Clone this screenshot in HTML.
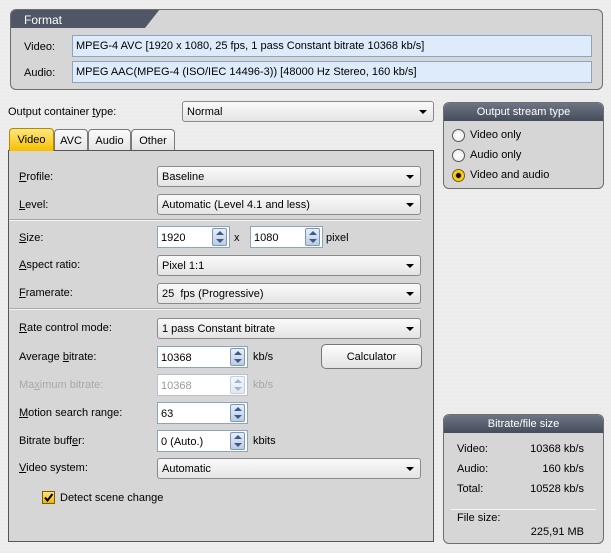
<!DOCTYPE html>
<html><head><meta charset="utf-8"><style>
*{box-sizing:border-box;margin:0;padding:0}
body{width:611px;height:553px;overflow:hidden;position:relative;font-family:"Liberation Sans",sans-serif;font-size:11px;color:#000;
background:repeating-linear-gradient(180deg,#f0f0f0 0px,#e6e6e6 1px,#f3f3f3 2px,#e9e9e9 3px,#efefef 4px);}
.a{position:absolute}
.panel{position:absolute;background:#d6d6d6;border:1px solid #6e6e6e;border-radius:6px}
.field{position:absolute;background:#deebfb;border:1px solid #8aa4c4;padding:4px 0 0 3px;white-space:nowrap;overflow:hidden;font-size:11px}
.combo{position:absolute;height:21px;border:1px solid #8a8a8a;border-radius:3px;background:linear-gradient(#fafafa,#e4e4e4);padding:4px 0 0 4px;white-space:nowrap}
.combo:after{content:"";position:absolute;right:6px;top:8px;border-left:4px solid transparent;border-right:4px solid transparent;border-top:4px solid #000}
.spin{position:absolute;height:22px;background:#fff;border:1px solid #8aa4c4;padding:5px 0 0 3px}
.spin i{position:absolute;right:2px;top:1px;width:15px;height:18px;border:1px solid #7e97b8;border-radius:2px;background:linear-gradient(#e6eefa,#bccce3)}
.spin i:before{content:"";position:absolute;left:3px;top:2px;border-left:4px solid transparent;border-right:4px solid transparent;border-bottom:4px solid #3c5a84}
.spin i:after{content:"";position:absolute;left:3px;top:10px;border-left:4px solid transparent;border-right:4px solid transparent;border-top:4px solid #3c5a84}
.spin.dis{border-color:#b5c2d3;color:#999}
.spin.dis i{opacity:.45}
.hdr{position:absolute;left:0;top:0;right:0;height:18px;background:linear-gradient(#6d7585,#454c5a);color:#fff;text-align:center;padding-top:3px;border-radius:5px 5px 0 0}
.tab{position:absolute;top:129px;height:21px;border:1px solid #7a7a7a;border-bottom:none;border-radius:4px 4px 0 0;background:linear-gradient(#fbfbfb,#e4e4e4);text-align:center;padding-top:5px}
.radio{position:absolute;width:13px;height:13px;border-radius:50%;border:1px solid #555;background:radial-gradient(#fff,#e8e8e8)}
.sep{position:absolute;height:2px;border-top:1px solid #a8a8a8;border-bottom:1px solid #f4f4f4}
u{text-decoration:underline}
</style></head><body>

<div class="panel" style="left:10px;top:9px;width:593px;height:81px;overflow:hidden">
  <svg class="a" style="left:-1px;top:-1px" width="160" height="20"><path d="M0 6 Q0 0 6 0 L150 0 L135 19 L0 19Z" fill="#4f5666"/></svg>
  <div class="a" style="left:13px;top:3px;color:#fff;font-size:12px">Format</div>
  <div class="a" style="left:13px;top:31px">Video:</div>
  <div class="a" style="left:13px;top:57px">Audio:</div>
</div>
<div class="field" style="left:72px;top:35px;width:520px;height:22px">MPEG-4 AVC [1920 x 1080, 25 fps, 1 pass Constant bitrate 10368 kb/s]</div>
<div class="field" style="left:72px;top:61px;width:520px;height:22px">MPEG AAC(MPEG-4 (ISO/IEC 14496-3)) [48000 Hz Stereo, 160 kb/s]</div>

<div class="a" style="left:8px;top:106px">Output container <u>t</u>ype:</div>
<div class="combo" style="left:182px;top:101px;width:252px;height:21px">Normal</div>

<div class="tab" style="left:9px;width:45px;top:128px;height:23px;background:linear-gradient(#ffe680,#f5c000);border-color:#b08a00;z-index:2">Video</div>
<div class="tab" style="left:54px;width:34px">AVC</div>
<div class="tab" style="left:88px;width:43px">Audio</div>
<div class="tab" style="left:131px;width:44px">Other</div>

<div class="a" style="left:8px;top:150px;width:426px;height:392px;background:#d6d6d6;border:1px solid #555"></div>

<div class="a" style="left:19px;top:171px"><u>P</u>rofile:</div>
<div class="combo" style="left:157px;top:166px;width:264px">Baseline</div>
<div class="a" style="left:19px;top:199px"><u>L</u>evel:</div>
<div class="combo" style="left:157px;top:194px;width:264px">Automatic (Level 4.1 and less)</div>
<div class="sep" style="left:9px;top:219px;width:412px"></div>
<div class="a" style="left:19px;top:232px"><u>S</u>ize:</div>
<div class="spin" style="left:157px;top:226px;width:73px">1920<i></i></div>
<div class="a" style="left:234px;top:232px">x</div>
<div class="spin" style="left:250px;top:226px;width:73px">1080<i></i></div>
<div class="a" style="left:326px;top:232px">pixel</div>
<div class="a" style="left:19px;top:259px"><u>A</u>spect ratio:</div>
<div class="combo" style="left:157px;top:255px;width:264px">Pixel 1:1</div>
<div class="a" style="left:19px;top:287px"><u>F</u>ramerate:</div>
<div class="combo" style="left:157px;top:283px;width:264px">25&nbsp; fps (Progressive)</div>
<div class="sep" style="left:9px;top:308px;width:412px"></div>
<div class="a" style="left:19px;top:322px"><u>R</u>ate control mode:</div>
<div class="combo" style="left:157px;top:318px;width:264px">1 pass Constant bitrate</div>
<div class="a" style="left:19px;top:351px">Average <u>b</u>itrate:</div>
<div class="spin" style="left:157px;top:346px;width:91px">10368<i></i></div>
<div class="a" style="left:253px;top:351px">kb/s</div>
<div class="a" style="left:321px;top:344px;width:101px;height:25px;border:1px solid #777;border-radius:5px;background:linear-gradient(#fdfdfd,#e2e2e2);text-align:center;padding-top:6px">Calculator</div>
<div class="a" style="left:19px;top:379px;color:#a8a8a8">Ma<u>x</u>imum bitrate:</div>
<div class="spin dis" style="left:157px;top:374px;width:91px">10368<i></i></div>
<div class="a" style="left:253px;top:379px;color:#a8a8a8">kb/s</div>
<div class="a" style="left:19px;top:407px"><u>M</u>otion search range:</div>
<div class="spin" style="left:157px;top:402px;width:91px">63<i></i></div>
<div class="a" style="left:19px;top:435px">Bitrate buff<u>e</u>r:</div>
<div class="spin" style="left:157px;top:430px;width:91px">0 (Auto.)<i></i></div>
<div class="a" style="left:253px;top:435px">kbits</div>
<div class="a" style="left:19px;top:462px"><u>V</u>ideo system:</div>
<div class="combo" style="left:157px;top:458px;width:264px">Automatic</div>
<div class="a" style="left:42px;top:491px;width:13px;height:13px;border:1px solid #7a5a00;background:linear-gradient(#ffe27a,#f0b800)">
<svg width="11" height="11" style="position:absolute;left:0;top:0"><path d="M2 5.5 L4.5 8.5 L9.5 2" stroke="#000" stroke-width="2" fill="none"/></svg></div>
<div class="a" style="left:60px;top:492px">Detect scene change</div>

<div class="panel" style="left:443px;top:102px;width:161px;height:87px;overflow:hidden">
  <div class="hdr">Output stream type</div>
  <div class="radio" style="left:8px;top:26px"></div><div class="a" style="left:26px;top:26px">Video only</div>
  <div class="radio" style="left:8px;top:46px"></div><div class="a" style="left:26px;top:46px">Audio only</div>
  <div class="radio" style="left:8px;top:66px;border-color:#7a5a00;background:radial-gradient(#000 0 2px,#f5c400 3px,#ffe06a)"></div><div class="a" style="left:26px;top:66px">Video and audio</div>
</div>

<div class="panel" style="left:443px;top:414px;width:161px;height:130px;overflow:hidden">
  <div class="hdr">Bitrate/file size</div>
  <div class="a" style="left:13px;top:28px">Video:</div><div class="a" style="right:19px;top:28px">10368 kb/s</div>
  <div class="a" style="left:13px;top:48px">Audio:</div><div class="a" style="right:19px;top:48px">160 kb/s</div>
  <div class="a" style="left:13px;top:68px">Total:</div><div class="a" style="right:19px;top:68px">10528 kb/s</div>
  <div class="a" style="left:7px;top:94px;width:145px;border-top:1px solid #f5f5f5;height:0"></div>
  <div class="a" style="left:13px;top:97px">File size:</div>
  <div class="a" style="right:19px;top:111px">225,91 MB</div>
</div>
</body></html>
